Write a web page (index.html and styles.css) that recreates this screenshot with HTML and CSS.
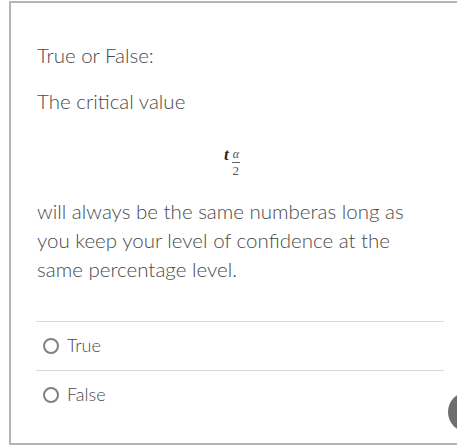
FILE: index.html
```html
<!DOCTYPE html>
<html>
<head>
<meta charset="utf-8">
<link rel="stylesheet" href="styles.css">
</head>
<body>
<div class="card">
  <div class="question">
    <p class="line">True or False:</p>
    <p class="line">The critical value</p>
    <div class="math">
      <span class="t">t</span>
      <span class="frac"><span class="num">α</span><span class="den">2</span></span>
    </div>
    <p class="para">will always be the same numberas long as you keep your level of confidence at the same percentage level.</p>
  </div>
  <div class="answers">
    <label class="answer"><span class="radio"></span><span class="label">True</span></label>
    <label class="answer"><span class="radio"></span><span class="label">False</span></label>
  </div>
  <div class="bubble"></div>
</div>
</body>
</html>
```
FILE: styles.css
```css
html, body {
  margin: 0;
  padding: 0;
  background: #fff;
}
body {
  font-family: Lato, "Noto Sans", sans-serif;
  font-weight: 300;
  color: #4a4a4a;
}
.card {
  position: relative;
  margin: 1px 0 0 9px;
  width: 446px;
  height: 440px;
  border: 2px solid #b5b5b5;
  border-right: none;
  overflow: hidden;
}
.question {
  padding: 38px 0 0 26px;
  width: 380px;
  font-size: 20.5px;
}
.line {
  margin: 0 0 17px 0;
  line-height: 29px;
}
.math {
  display: flex;
  justify-content: center;
  align-items: flex-start;
  gap: 3px;
  height: 81px;
  box-sizing: border-box;
  padding: 31px 0 0 10px;
  margin-top: -17px;
  font-family: "Liberation Serif", serif;
  color: #2a2a2a;
}
.t {
  font-style: italic;
  font-weight: bold;
  font-size: 17px;
  line-height: 16px;
}
.frac {
  display: inline-flex;
  flex-direction: column;
  align-items: center;
  margin-top: 2px;
  color: #555;
}
.num {
  font-style: italic;
  font-size: 12px;
  line-height: 11px;
  padding: 0 1px 2px;
  border-bottom: 1px solid #666;
}
.den {
  font-size: 13px;
  line-height: 11px;
  padding-top: 2px;
}
.para {
  margin: 0;
  line-height: 29px;
}
.answers {
  margin: 37px 0 0 25px;
  width: 408px;
}
.answer {
  display: flex;
  align-items: center;
  gap: 8px;
  height: 48px;
  box-sizing: content-box;
  border-top: 1px solid #d9d9d9;
  padding-left: 7px;
  font-size: 18px;
}
.label {
  margin-top: -3px;
}
.radio {
  flex: none;
  width: 12px;
  height: 12px;
  border: 2px solid #808080;
  border-radius: 50%;
}
.bubble {
  position: absolute;
  left: 437px;
  top: 389px;
  width: 40px;
  height: 40px;
  border-radius: 50%;
  background: #6e6e6e;
}
```
